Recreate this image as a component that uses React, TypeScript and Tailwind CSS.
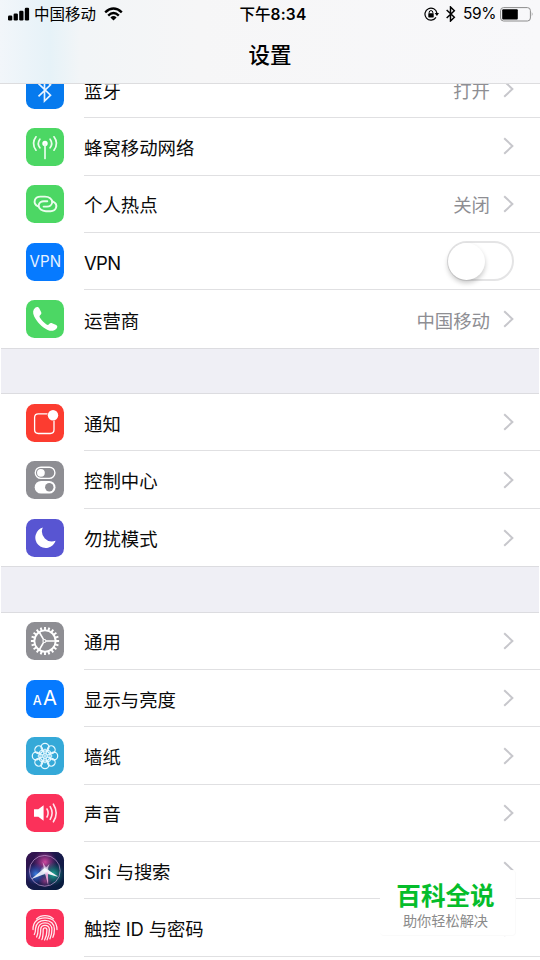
import type { ReactNode } from 'react'

type Row = {
  label: string
  icon: ReactNode
  tile: string
  value?: string
  toggle?: boolean
  tracking?: string
}

const petals = [0, 45, 90, 135, 180, 225, 270, 315]
const gearTeeth = Array.from({ length: 20 }, (_, index) => index * 18)

function BluetoothGlyph({ width = 1.7 }: { width?: number }) {
  return (
    <path
      d="M12.5 12.7 L24.5 24.2 L18.5 30 V8 L24.5 13.8 L12.5 25.3"
      fill="none"
      stroke="currentColor"
      strokeWidth={width}
      strokeLinejoin="miter"
    />
  )
}

function CellularIcon() {
  return (
    <g fill="none" stroke="#e9fdec" strokeWidth="1.7" strokeLinecap="round">
      <circle cx="19" cy="15.5" r="2.7" fill="#fff" stroke="none" />
      <path d="M19 16 V30.4" />
      <path d="M13.9 11.2 Q10.7 15.5 13.9 19.8 M24.1 11.2 Q27.3 15.5 24.1 19.8" />
      <path d="M10 8.8 Q5 15.5 10 22.2 M28 8.8 Q33 15.5 28 22.2" />
    </g>
  )
}

function HotspotIcon() {
  return (
    <g fill="none" stroke="#e9fdec" strokeWidth="1.9" strokeLinecap="round">
      <path d="M12.2 21.4 C9.4 20.2 8 17.7 8.9 15 C9.7 12.6 11.8 11.6 14.3 11.6 H19 C23 11.6 26.4 14 26.2 17.3 C26 20 23.6 21.6 21 21.6 H17.6" />
      <path d="M26.6 16.4 C29.4 17.6 30.9 20.1 30 22.8 C29.2 25.2 27 26.2 24.6 26.2 H19.9 C15.9 26.2 12.5 23.8 12.7 20.5 C12.9 17.8 15.3 16.2 17.9 16.2 H21.3" />
    </g>
  )
}

function VpnIcon() {
  return (
    <text x="19.3" y="24" textAnchor="middle" fontSize="15.6" fill="#e8f3ff" textLength="31.4" lengthAdjust="spacingAndGlyphs">
      VPN
    </text>
  )
}

function PhoneIcon() {
  return (
    <path
      d="M9.2 7.8 C10.8 6.4 12.3 6.8 13.2 8.3 L15.1 12 C15.8 13.4 15.2 14.2 14.1 15.2 C13.3 16 13.3 16.7 14 17.8 C15.8 20.6 18 22.9 20.5 24.5 C21.6 25.2 22.3 25 23 24.2 C23.9 23.1 24.8 22.7 26.1 23.2 L30.2 25.1 C31.5 25.9 31.7 27.1 30.6 28.4 C28.3 31 25.3 31.6 21.7 29.9 C15.9 27 11 22.1 8.2 16.4 C6.5 12.9 6.8 9.9 9.2 7.8 Z"
      fill="#fff"
    />
  )
}

function NotificationsIcon() {
  return (
    <>
      <path
        d="M21.5 9.8 H12.3 Q8.6 9.8 8.6 13.5 V25.8 Q8.6 29.5 12.3 29.5 H24.3 Q28 29.5 28 25.8 V16.7"
        fill="none"
        stroke="#fff"
        strokeWidth="1.3"
      />
      <circle cx="27" cy="11.2" r="5.2" fill="#fff" />
    </>
  )
}

function ControlCenterIcon() {
  return (
    <>
      <rect x="9.3" y="6.2" width="19.6" height="11.2" rx="5.6" fill="none" stroke="#fff" strokeWidth="1.4" />
      <circle cx="14.9" cy="11.8" r="3.9" fill="#fff" />
      <rect x="8.7" y="20" width="20.8" height="12.6" rx="6.3" fill="#fff" />
      <circle cx="23.3" cy="26.3" r="4.2" fill="#8e8e93" />
    </>
  )
}

function MoonIcon() {
  return <path d="M16.8 8.6 A10.4 10.4 0 1 0 29.6 21.8 A10 10 0 0 1 16.8 8.6 Z" fill="#fff" />
}

function GearIcon() {
  return (
    <g fill="none" stroke="#fff">
      <circle cx="19" cy="19" r="10.6" strokeWidth="1.8" />
      {gearTeeth.map((angle) => (
        <path key={angle} d="M19 8.3 V4.9" strokeWidth="1.9" transform={`rotate(${angle} 19 19)`} />
      ))}
      <circle cx="18.4" cy="19" r="1.5" strokeWidth="1.1" />
      <path d="M20 19 H29.5 M17.6 17.6 L13.2 10 M17.6 20.4 L13.2 28" strokeWidth="1.6" />
    </g>
  )
}

function DisplayIcon() {
  return (
    <g fill="#fff">
      <text x="6.8" y="24.9" fontSize="12.6" fontWeight="500">A</text>
      <text x="17" y="24.9" fontSize="20.5" textLength="14" lengthAdjust="spacingAndGlyphs">A</text>
    </g>
  )
}

function WallpaperIcon() {
  return (
    <g fill="none" stroke="#e6f8ff" strokeWidth="1.25">
      {petals.map((angle) => (
        <circle key={angle} cx="19" cy="10.2" r="3.9" transform={`rotate(${angle} 19 19)`} />
      ))}
      {petals.map((angle) => (
        <ellipse key={`in-${angle}`} cx="19" cy="14.6" rx="2" ry="2.5" strokeWidth="1" transform={`rotate(${angle} 19 19)`} />
      ))}
      <circle cx="19" cy="19" r="1" fill="#e6f8ff" stroke="none" />
    </g>
  )
}

function SoundIcon() {
  return (
    <>
      <path d="M8 15.3 H12.3 L17.6 11.2 V26.8 L12.3 22.7 H8 Z" fill="#fff" />
      <g fill="none" stroke="#ffe3ea" strokeWidth="1.6" strokeLinecap="round">
        <path d="M21 15 Q23.2 19 21 23" />
        <path d="M24.2 12.6 Q28 19 24.2 25.4" />
        <path d="M27.4 10.2 Q33 19 27.4 27.8" />
      </g>
    </>
  )
}

function SiriIcon() {
  return (
    <>
      <defs>
        <linearGradient id="siriBase" x1="0" y1="0" x2="1" y2="1">
          <stop offset="0" stopColor="#3a1150" />
          <stop offset="0.5" stopColor="#171a4a" />
          <stop offset="1" stopColor="#051d3c" />
        </linearGradient>
        <radialGradient id="siriPink" cx="0.5" cy="0.5" r="0.5">
          <stop offset="0" stopColor="#d0489f" />
          <stop offset="1" stopColor="#a0308a" stopOpacity="0" />
        </radialGradient>
        <radialGradient id="siriBlue" cx="0.5" cy="0.5" r="0.5">
          <stop offset="0" stopColor="#3a7fe0" />
          <stop offset="1" stopColor="#2a46b8" stopOpacity="0" />
        </radialGradient>
        <radialGradient id="siriTeal" cx="0.5" cy="0.5" r="0.5">
          <stop offset="0" stopColor="#1fae98" />
          <stop offset="1" stopColor="#0f7570" stopOpacity="0" />
        </radialGradient>
        <radialGradient id="siriGlow" cx="0.5" cy="0.5" r="0.5">
          <stop offset="0" stopColor="#fff" />
          <stop offset="1" stopColor="#d8e9ff" stopOpacity="0" />
        </radialGradient>
      </defs>
      <rect width="38" height="38" fill="url(#siriBase)" />
      <circle cx="19" cy="10" r="12" fill="url(#siriPink)" />
      <circle cx="10" cy="22" r="11" fill="url(#siriBlue)" />
      <circle cx="27" cy="22" r="12" fill="url(#siriTeal)" />
      <circle cx="19" cy="29" r="7" fill="url(#siriPink)" opacity="0.6" />
      <circle cx="18.8" cy="18.8" r="15.4" fill="none" stroke="#c79fd6" strokeOpacity="0.75" strokeWidth="0.9" />
      <path d="M18 17 L16.6 10 L20 15.5 L23.4 12 L21.5 18 L32.5 24.6 L21 22 Z" fill="#f3d5f2" fillOpacity="0.7" />
      <path d="M18.5 16 L5 27.3 L17.4 22.6 L20 21 L32 25 L21.6 17.6 Z" fill="#fff" fillOpacity="0.85" />
      <path d="M18.6 20 L22.2 33.5 L22 20.5 Z" fill="#f5a6dc" fillOpacity="0.9" />
      <circle cx="18.8" cy="18.8" r="5" fill="url(#siriGlow)" />
    </>
  )
}

function FingerprintIcon() {
  return (
    <g fill="none" stroke="#ffe9ee" strokeWidth="1.3" strokeLinecap="round">
      <path d="M10.5 9.9 C15 5.6 23 5.6 27.5 9.9" />
      <path d="M7 20.5 C6.9 12.4 12 8.9 19 8.9 C26.3 8.9 30.9 13.2 31 20.5" />
      <path d="M8.3 25.5 C9.6 23.6 9.5 21.7 9.5 19.7 C9.8 14.5 13.7 11.3 19 11.3 C24.8 11.3 28.3 15 28.4 20 C28.5 23.4 27.9 26.3 26.9 28.3" />
      <path d="M10.6 28 C12 25.5 12.1 23 12.1 20 C12.3 16.3 15.2 13.8 19 13.8 C23.1 13.8 25.8 16.5 25.9 20.3 C26 24 25.2 27.3 23.9 29.9" />
      <path d="M13 29.5 C14.5 26.8 14.7 23.8 14.7 20.3 C14.8 18 16.6 16.3 19 16.3 C21.7 16.3 23.3 18.2 23.4 20.5 C23.4 24.3 22.5 28 21.1 30.8" />
      <path d="M15.9 30.6 C17 27.8 17.2 24.5 17.2 20.7 C17.2 19.5 18 18.8 19 18.8 C20.2 18.8 20.9 19.7 20.9 20.9 C20.9 24.6 20 28.3 18.6 31" />
    </g>
  )
}

const groups: Row[][] = [
  [
    { label: '蓝牙', icon: <g color="#e8f3ff"><BluetoothGlyph /></g>, tile: 'bg-[#067aee]', value: '打开' },
    { label: '蜂窝移动网络', icon: <CellularIcon />, tile: 'bg-[#4cd764]' },
    { label: '个人热点', icon: <HotspotIcon />, tile: 'bg-[#4cd764]', value: '关闭' },
    { label: 'VPN', icon: <VpnIcon />, tile: 'bg-[#067aff]', toggle: true, tracking: 'tracking-[-0.6px]' },
    { label: '运营商', icon: <PhoneIcon />, tile: 'bg-[#4cd764]', value: '中国移动' },
  ],
  [
    { label: '通知', icon: <NotificationsIcon />, tile: 'bg-[#fc3c30]' },
    { label: '控制中心', icon: <ControlCenterIcon />, tile: 'bg-[#8e8e93]' },
    { label: '勿扰模式', icon: <MoonIcon />, tile: 'bg-[#5855d2]' },
  ],
  [
    { label: '通用', icon: <GearIcon />, tile: 'bg-[#8e8e93]' },
    { label: '显示与亮度', icon: <DisplayIcon />, tile: 'bg-[#067aff]' },
    { label: '墙纸', icon: <WallpaperIcon />, tile: 'bg-[#35a9d8]' },
    { label: '声音', icon: <SoundIcon />, tile: 'bg-[#fb315a]' },
    { label: 'Siri 与搜索', icon: <SiriIcon />, tile: 'bg-[#171a4a]', tracking: 'tracking-[-0.25px]' },
    { label: '触控 ID 与密码', icon: <FingerprintIcon />, tile: 'bg-[#fb315a]', tracking: 'tracking-[-0.1px]' },
  ],
]

function Chevron() {
  return (
    <svg width="11" height="18" viewBox="0 0 11 18" className="ml-[13px] shrink-0">
      <path d="M1.2 1.2 L9.4 9 L1.2 16.8" fill="none" stroke="#c7c7cc" strokeWidth="2" />
    </svg>
  )
}

function Toggle() {
  return (
    <div className="flex h-[40px] w-[67px] items-center rounded-full border-2 border-[#e4e4e5] bg-white">
      <div className="-ml-px size-[37px] rounded-full bg-white shadow-[0_3px_5px_rgba(0,0,0,0.22)]" />
    </div>
  )
}

function SettingsRow({ row, last }: { row: Row; last: boolean }) {
  return (
    <div className="flex h-[57.4px] pl-[26px]">
      <div className="flex w-[58px] shrink-0 items-center">
        <svg width="38" height="38" viewBox="0 0 38 38" className={`rounded-[8.5px] ${row.tile}`}>
          {row.icon}
        </svg>
      </div>
      <div className={`flex flex-1 items-center pr-[26px] ${last ? '' : 'border-b border-[#e0e0e2]'}`}>
        <span className={`flex-1 pt-[3px] text-[18.4px] leading-6 text-[#0a0a0a] ${row.tracking ?? ''}`}>{row.label}</span>
        {row.value ? <span className="pt-[3px] text-[18.4px] leading-6 text-[#8e8e93]">{row.value}</span> : null}
        {row.toggle ? <Toggle /> : <Chevron />}
      </div>
    </div>
  )
}

function StatusBar() {
  return (
    <div className="grid h-[28px] grid-cols-3 items-center pr-[6px] pl-2 text-[15.5px] leading-5">
      <div className="flex items-center">
        <svg width="22" height="14" viewBox="0 0 22 14">
          <rect x="0" y="8.5" width="4.3" height="5" rx="1.2" />
          <rect x="5.6" y="6.5" width="4.3" height="7" rx="1.2" />
          <rect x="11.2" y="3.8" width="4.3" height="9.7" rx="1.2" />
          <rect x="16.8" y="0.8" width="4.3" height="12.7" rx="1.2" />
        </svg>
        <span className="ml-1 pt-px">中国移动</span>
        <svg width="19" height="14" viewBox="0 0 19 14" className="ml-2">
          <g fill="none" stroke="#000" strokeWidth="2.4">
            <path d="M1.2 5.4 Q9.5 -2.2 17.8 5.4" />
            <path d="M4.2 8.6 Q9.5 3.6 14.8 8.6" />
          </g>
          <path d="M6.4 10.4 Q9.5 7.8 12.6 10.4 L9.5 13.6 Z" />
        </svg>
      </div>
      <div className="pt-px pl-[4px] text-center text-[15.5px] font-medium">
        下午<span className="font-semibold tracking-[0.2px]">8:34</span>
      </div>
      <div className="flex items-center justify-end">
        <svg width="15" height="14" viewBox="0 0 15 14" className="mr-[6px]">
          <path d="M12 10.4 A6 6 0 1 1 12.9 6.2" fill="none" stroke="#000" strokeWidth="1.2" />
          <path d="M10.7 6 H15 L12.9 9 Z" />
          <rect x="4.3" y="6.2" width="5.4" height="4.2" rx="0.6" />
          <path d="M5.2 6.4 V5.2 Q5.2 3.6 7 3.6 Q8.8 3.6 8.8 5.2 V6.4" fill="none" stroke="#000" />
        </svg>
        <svg width="11" height="16" viewBox="10.5 6.5 16 25" className="mr-[7px]">
          <BluetoothGlyph width={2.3} />
        </svg>
        <span className="mr-[4px] text-[15.5px] tracking-[-0.4px]">59%</span>
        <svg width="34" height="15" viewBox="0 0 34 15">
          <rect x="0.6" y="0.6" width="29.8" height="13.4" rx="3" fill="none" stroke="#8c8c8c" strokeWidth="1" />
          <rect x="2.2" y="2.2" width="15.6" height="10.2" rx="1" />
          <path d="M31.8 5 Q33.6 7.3 31.8 9.6 Z" fill="#8c8c8c" />
        </svg>
      </div>
    </div>
  )
}

function Watermark() {
  return (
    <div className="absolute top-[870px] left-[380px] z-20 h-[66px] w-[136px] rounded-[4px] border-r border-b border-[#fafafa] bg-white text-center">
      <p className="mt-[8px] pr-[4px] text-[24.6px] leading-[36px] font-bold whitespace-nowrap text-[#05bd2b]">百科全说</p>
      <p className="-mt-[3px] pr-[4px] text-[14.2px] leading-5 whitespace-nowrap text-[#8b8b8b]">助你轻松解决</p>
    </div>
  )
}

export default function App() {
  return (
    <div className="relative h-[960px] w-[540px] overflow-hidden bg-white font-['Inter','Noto_Sans_CJK_SC',sans-serif] text-black">
      <header className="relative z-10 h-[84px] border-b border-[#dddddf] bg-[#f7f7f8] bg-[linear-gradient(90deg,#f2f6fa_0px,#e6f2f8_50px,#f2f5f7_80px,#f6f6f7_200px,#f8f8fa_540px)]">
        <StatusBar />
        <h1 className="pt-[13px] text-center text-[21.5px] leading-7 font-medium">设置</h1>
      </header>
      <main className="-mt-[23.2px]">
        {groups.map((rows, index) => (
          <section key={rows[0].label}>
            {index > 0 ? <div className="mx-px h-[46.3px] border-y border-[#dcdce0] bg-[#efeff5]" /> : null}
            {rows.map((row, rowIndex) => (
              <SettingsRow key={row.label} row={row} last={rowIndex === rows.length - 1 && index < groups.length - 1} />
            ))}
          </section>
        ))}
      </main>
      <Watermark />
    </div>
  )
}
